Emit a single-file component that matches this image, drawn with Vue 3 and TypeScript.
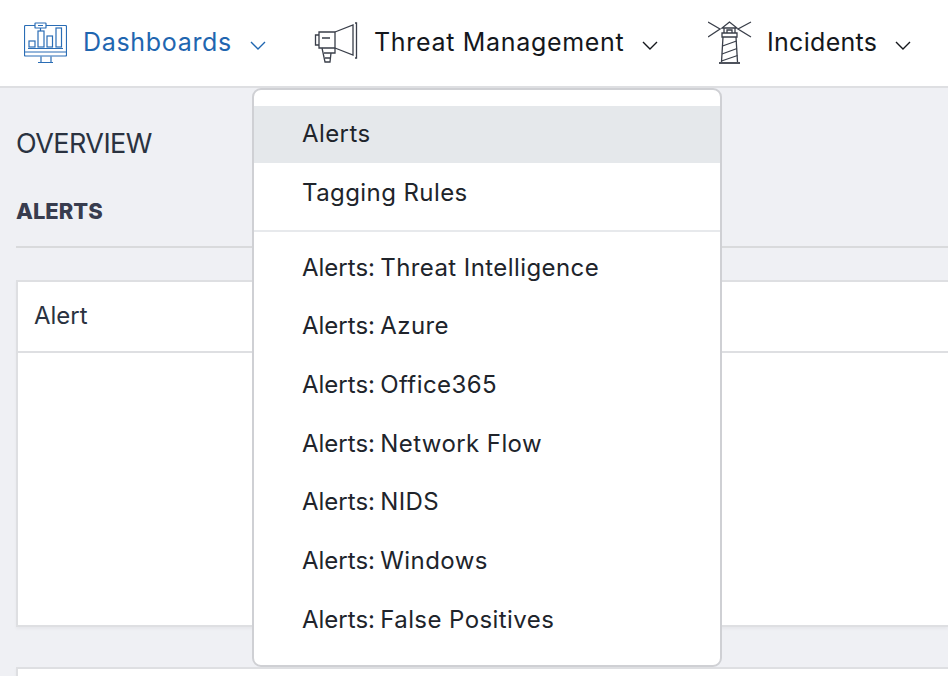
<script setup lang="ts">
const items: string[] = [
  'Threat Intelligence',
  'Azure',
  'Office365',
  'Network Flow',
  'NIDS',
  'Windows',
  'False Positives',
]
</script>

<template>
  <div class="page">
    <nav class="nav">
      <a class="nav-item active dash">
        <svg class="ico" width="43" height="42" viewBox="0 0 43 42" fill="none" stroke="#2a6db5" stroke-width="1.200">
          <path d="M11 3.500H1.500a1 1 0 0 0-1 1V33a1 1 0 0 0 1 1h40a1 1 0 0 0 1-1V4.500a1 1 0 0 0-1-1H22" />
          <path d="M.5 30h42M17 34.500V40M27 34.500V40M14 40.500h15" />
          <rect x="11" y="1" width="11" height="5" rx=".6" />
          <path d="M14 3.500h5M16.500 6v3" />
          <rect x="5" y="19" width="6" height="6" />
          <rect x="14" y="9" width="6" height="16" />
          <rect x="23" y="14" width="5.500" height="11" />
          <rect x="32" y="6" width="5.500" height="19" />
          <path d="M4 26.500h35" />
        </svg>
        <span class="label">Dashboards</span>
        <svg class="chev" width="16" height="9" viewBox="0 0 16 9" fill="none" stroke="#1f66b0" stroke-width="1.400"><path d="M1 1l7 7 7-7" /></svg>
      </a>
      <a class="nav-item threat">
        <svg class="ico" width="44" height="42" viewBox="0 0 44 42" fill="none" stroke="#3a3f4a" stroke-width="1.300">
          <path d="M5 13H1.500v10H5M5 10h16v16H5z" />
          <path d="M8 16h8M21 10l18-7v30l-18-7" />
          <path d="M41 1h1.500v35H41" />
          <path d="M8 26l3 14h5l1-9h4v-5M10 31h7M11 36h5" />
        </svg>
        <span class="label">Threat Management</span>
        <svg class="chev" width="16" height="9" viewBox="0 0 16 9" fill="none" stroke="#14171c" stroke-width="1.400"><path d="M1 1l7 7 7-7" /></svg>
      </a>
      <a class="nav-item inc">
        <svg class="ico" width="44" height="44" viewBox="0 0 44 44" fill="none" stroke="#3a3f4a" stroke-width="1.300">
          <path d="M0 1l12 7-12 8M43 1l-13 7 13 8" />
          <path d="M21.500 1l-7.500 6h15zM16 7v5h11V7M19 12V9h5v3M14 12h15v4H14z" />
          <path d="M15 16l-1.500 25M28 16l1.500 25" />
          <path d="M14.500 25l14-5M14 33l15-5.500M13.500 40l16-5.500" />
          <path d="M11 42h21" stroke-width="1.800" />
        </svg>
        <span class="label">Incidents</span>
        <svg class="chev" width="16" height="9" viewBox="0 0 16 9" fill="none" stroke="#14171c" stroke-width="1.400"><path d="M1 1l7 7 7-7" /></svg>
      </a>
    </nav>

    <main class="content">
      <h1 class="title">OVERVIEW</h1>
      <h2 class="section">ALERTS</h2>
      <section class="card first">
        <header class="card-head">Alert</header>
        <div class="card-body"></div>
      </section>
      <section class="card last"></section>
    </main>

    <div class="menu">
      <a class="menu-item selected">Alerts</a>
      <a class="menu-item">Tagging Rules</a>
      <div class="divider"></div>
      <a v-for="item in items" :key="item" class="menu-item prefixed">Alerts: <span class="rest">{{ item }}</span></a>
    </div>
  </div>
</template>

<style>
html, body { margin: 0; background: #eff0f4; overflow: hidden; }
</style>

<style scoped>
.page {
  position: relative;
  width: 948px;
  height: 676px;
  overflow: hidden;
  background: #eff0f4;
  font-family: Inter, "Noto Sans", sans-serif;
  color: #20242b;
}
.nav {
  display: flex;
  align-items: center;
  box-sizing: border-box;
  height: 88px;
  background: #fff;
  border-bottom: 2px solid #dedfe2;
  padding-left: 24px;
}
.nav-item {
  display: flex;
  align-items: center;
  flex: none;
  font-size: 25px;
  color: #14171c;
}
.nav-item.active { color: #1f66b0; }
.dash { width: 290px; }
.threat { width: 394px; }
.label { letter-spacing: .68px; margin-bottom: 2px; }
.inc .label { letter-spacing: .3px; }
.dash .ico { margin-right: 16px; }
.threat .ico { margin-right: 16px; }
.inc .ico { margin-right: 15px; }
.chev { margin-top: 5px; }
.dash .chev { margin-left: 18px; }
.threat .chev { margin-left: 18px; }
.inc .chev { margin-left: 18px; }
.content { padding: 0 0 0 16px; }
.title {
  margin: 0;
  padding-top: 38px;
  font-size: 27px;
  line-height: 36px;
  font-weight: 400;
  color: #2a3240;
  letter-spacing: -.55px;
}
.section {
  margin: 0;
  padding: 36px 0 22px;
  line-height: 26px;
  font-size: 22px;
  font-weight: 800;
  color: #383c4e;
  border-bottom: 2px solid #d9dadc;
}
.card {
  background: #fff;
  border: 2px solid #dedfe2;
  border-right: 0;
  box-shadow: 0 2px 3px rgba(0, 0, 0, .04);
}
.card.first { margin-top: 32px; margin-bottom: 40px; }
.card.last { height: 60px; }
.card-head {
  box-sizing: border-box;
  height: 71px;
  padding: 0 0 2px 16px;
  display: flex;
  align-items: center;
  font-size: 24px;
  color: #2a3240;
  border-bottom: 2px solid #dedfe2;
}
.card-body { height: 272px; }
.menu {
  position: absolute;
  left: 252px;
  top: 88px;
  box-sizing: border-box;
  width: 470px;
  height: 579px;
  padding: 16px 0;
  background: #fff;
  border: 2px solid #cfd0d4;
  border-radius: 9px;
  font-size: 24px;
  color: #20242b;
}
.menu-item {
  display: block;
  box-sizing: border-box;
  height: 58.700px;
  line-height: 60px;
  padding-left: 48px;
  letter-spacing: .42px;
}
.menu-item.prefixed { letter-spacing: 0; word-spacing: -1.500px; }
.rest { word-spacing: 0; letter-spacing: .42px; }
.menu-item.selected { height: 57px; line-height: 55px; background: #e5e8eb; }
.divider { height: 2px; margin: 8px 0 6px; background: #e7e9ec; }
</style>
